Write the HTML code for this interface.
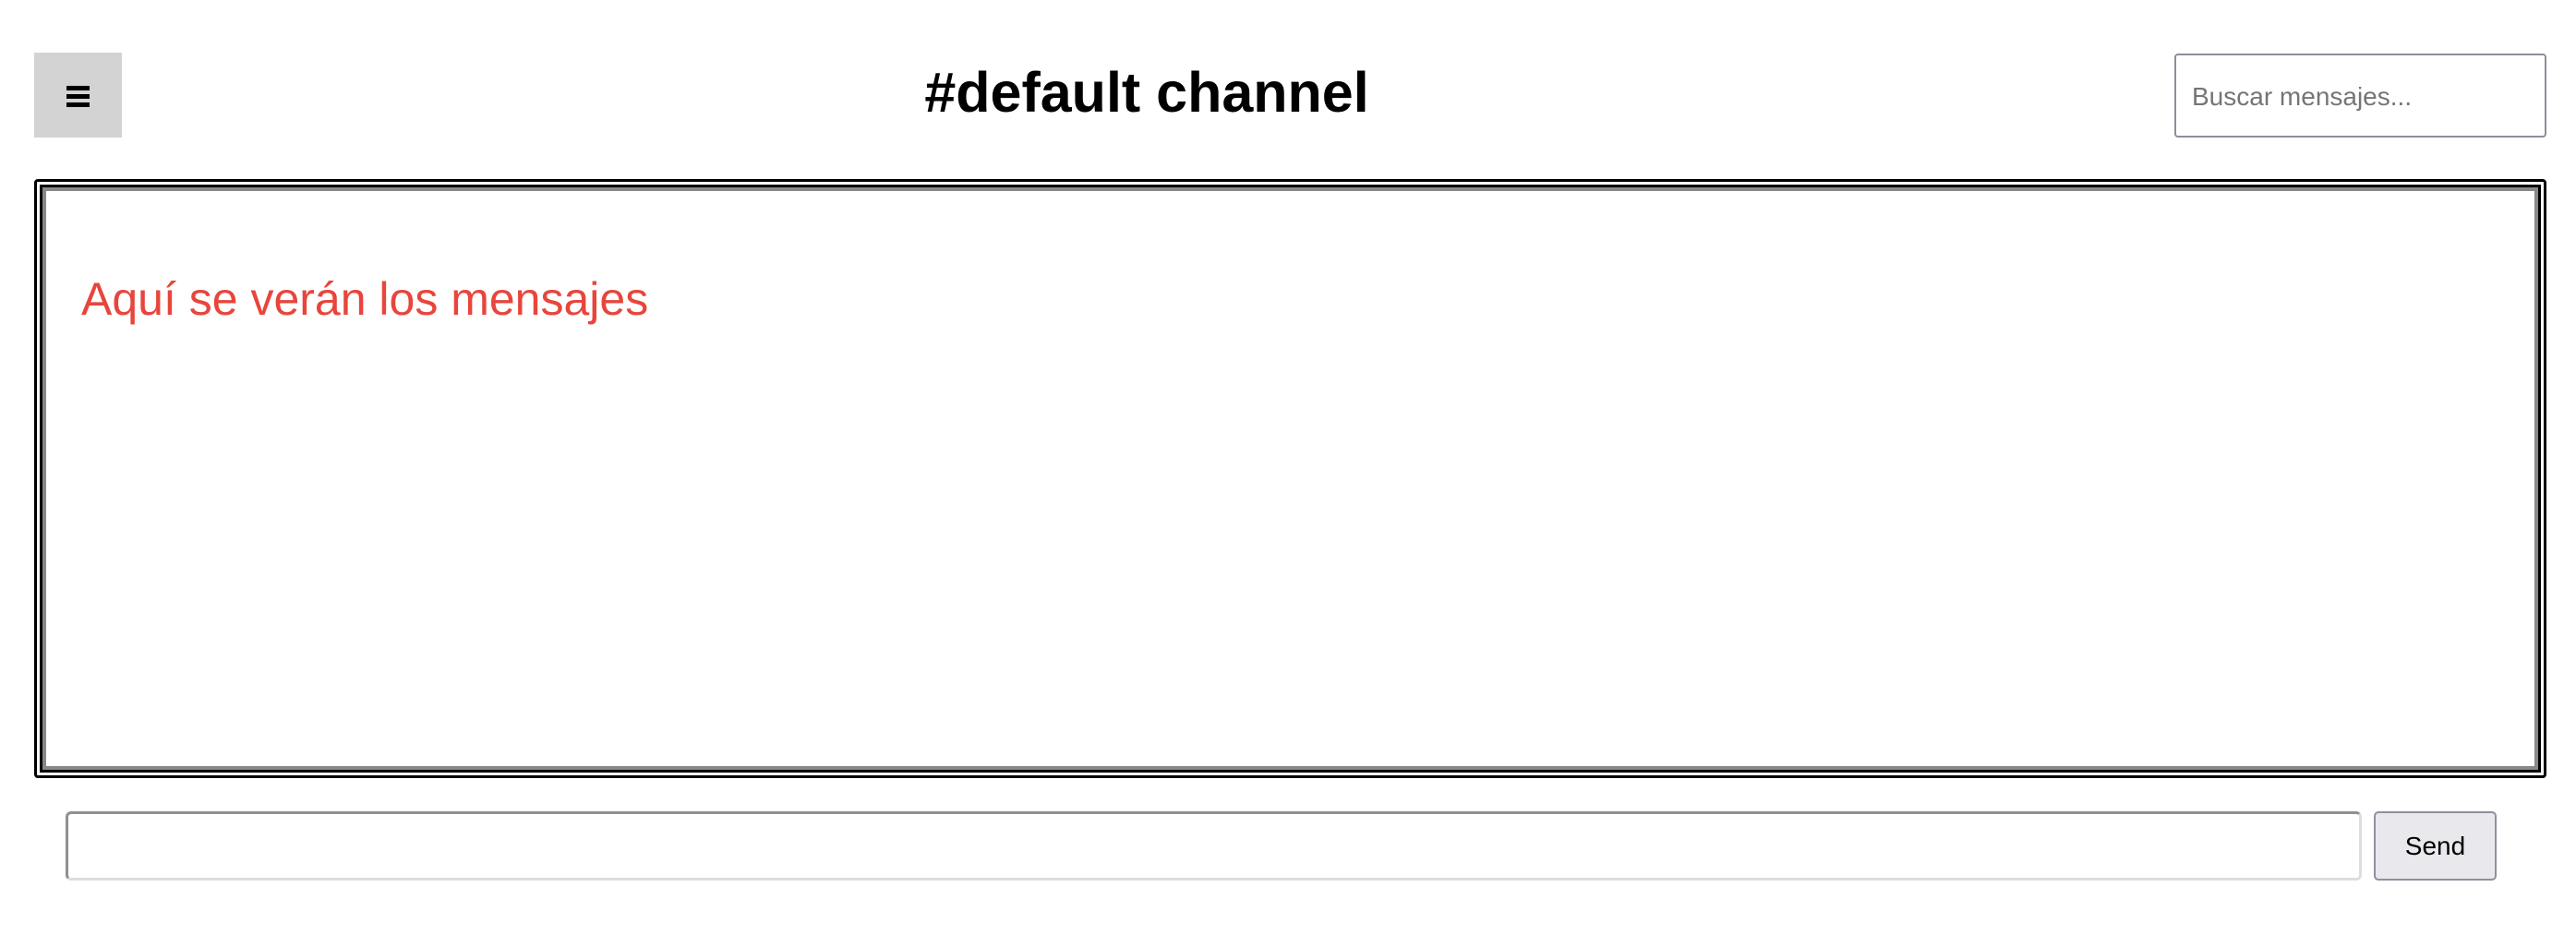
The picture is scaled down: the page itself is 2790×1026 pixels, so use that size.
<!DOCTYPE html>
<html><head><meta charset="utf-8"><style>
html,body{margin:0;padding:0;background:#fff;width:2790px;height:1026px;overflow:hidden;font-family:"Liberation Sans",sans-serif;}
.menu{position:absolute;left:37px;top:57px;width:95px;height:92px;background:#d3d3d3;}
.menu i{position:absolute;left:35px;width:25px;height:5px;background:#000;}
h1{position:absolute;left:0;width:2484px;top:60px;margin:0;text-align:center;font-size:61px;font-weight:bold;line-height:80px;color:#000;}
.search{position:absolute;left:2355px;top:58px;width:403px;height:91px;border:2px solid #8e8e9a;border-radius:4px;box-sizing:border-box;}
.search span{position:absolute;left:17px;top:29px;font-size:28px;color:#757575;}
.box{position:absolute;left:37px;top:194px;width:2721px;height:649px;box-sizing:border-box;border:9px double #000;border-radius:4px;box-shadow:inset 0 0 0 4px #888;}
.box p{position:absolute;left:42px;top:92px;margin:0;font-size:50px;color:#e8453c;}
.inp{position:absolute;left:71px;top:879px;width:2487px;height:75px;box-sizing:border-box;border:3px solid #ddd;border-top-color:#909090;border-left-color:#909090;border-radius:6px;}
.send{position:absolute;left:2571px;top:879px;width:133px;height:75px;box-sizing:border-box;background:#e9e9ed;border:2px solid #8f8f9d;border-radius:5px;font-size:28px;text-align:center;line-height:71px;color:#000;}
</style></head><body>
<div class="menu"><i style="top:36px"></i><i style="top:45px"></i><i style="top:54px"></i></div>
<h1>#default channel</h1>
<div class="search"><span>Buscar mensajes...</span></div>
<div class="box"><p>Aquí se verán los mensajes</p></div>
<div class="inp"></div>
<div class="send">Send</div>
</body></html>
